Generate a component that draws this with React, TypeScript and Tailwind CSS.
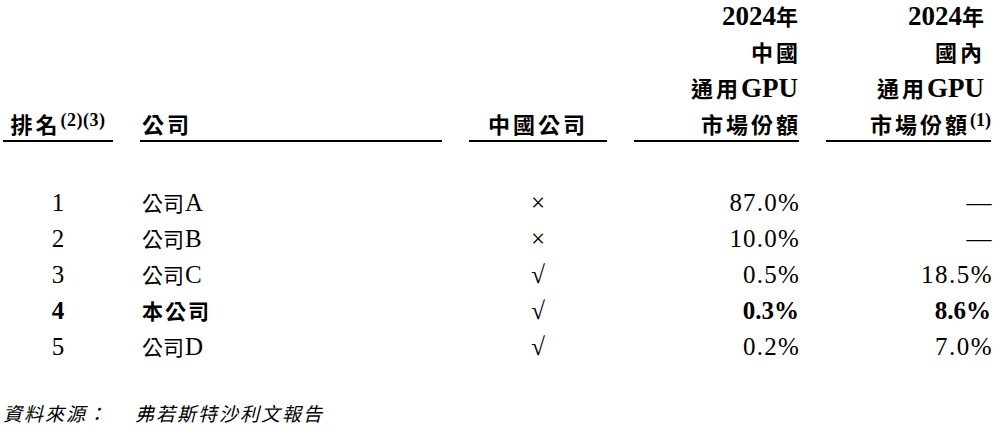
import React from "react";

const font = {
  fontFamily:
    '"Liberation Serif", "Noto Sans CJK TC", "Noto Sans CJK SC", serif',
};

const rows = [
  { rank: "1", cjk: "公司", lat: "A", cn: "×", a: "87.0%", b: "—", bold: false },
  { rank: "2", cjk: "公司", lat: "B", cn: "×", a: "10.0%", b: "—", bold: false },
  { rank: "3", cjk: "公司", lat: "C", cn: "√", a: "0.5%", b: "18.5%", bold: false },
  { rank: "4", cjk: "本公司", lat: "", cn: "√", a: "0.3%", b: "8.6%", bold: true },
  { rank: "5", cjk: "公司", lat: "D", cn: "√", a: "0.2%", b: "7.0%", bold: false },
];

const grid =
  "grid grid-cols-[110px_302px_138px_165px_165px] gap-x-[27px]";

export default function App() {
  return (
    <div
      className="w-[1000px] h-[435px] bg-white text-black px-[3px] overflow-hidden"
      style={font}
    >
      {/* header */}
      <div className={`${grid} items-end font-bold text-[22px]`}>
        <div className="border-b-2 border-black text-center">
          <div className="h-[32px] leading-[36px] tracking-[3px] whitespace-nowrap">
            排名
            <span className="text-[18px] leading-none tracking-[0.5px] relative top-[-7px]">
              (2)(3)
            </span>
          </div>
        </div>
        <div className="border-b-2 border-black">
          <div className="h-[32px] leading-[36px] tracking-[3px] pl-[2px]">
            公司
          </div>
        </div>
        <div className="border-b-2 border-black text-center">
          <div className="h-[32px] leading-[36px] tracking-[3px]">
            中國公司
          </div>
        </div>
        <div className="border-b-2 border-black text-right">
          <div className="h-[36px] leading-[36px] mr-[1px]">
            <span className="text-[27px] leading-none">2024</span>年
          </div>
          <div className="h-[36px] leading-[36px] tracking-[3px] mr-[-2px]">
            中國
          </div>
          <div className="h-[36px] leading-[36px] mr-[1px]">
            <span className="tracking-[3px]">通用</span>
            <span className="text-[27px] leading-none">GPU</span>
          </div>
          <div className="h-[32px] leading-[36px] tracking-[3px] mr-[-2px]">
            市場份額
          </div>
        </div>
        <div className="border-b-2 border-black text-right">
          <div className="h-[36px] leading-[36px] mr-[7px]">
            <span className="text-[27px] leading-none">2024</span>年
          </div>
          <div className="h-[36px] leading-[36px] tracking-[3px] mr-[6px]">
            國內
          </div>
          <div className="h-[36px] leading-[36px] mr-[7px]">
            <span className="tracking-[3px]">通用</span>
            <span className="text-[27px] leading-none">GPU</span>
          </div>
          <div className="h-[32px] leading-[36px] tracking-[3px] whitespace-nowrap">
            市場份額
            <span className="text-[18px] leading-none tracking-normal relative top-[-7px]">
              (1)
            </span>
          </div>
        </div>
      </div>

      {/* body */}
      <div className="mt-[43px] text-[25px]">
        {rows.map((r) => (
          <div
            key={r.rank}
            className={`${grid} h-[36px] leading-[36px] ${r.bold ? "font-bold" : ""}`}
          >
            <div className="text-center">{r.rank}</div>
            <div className="pl-[2px] whitespace-nowrap">
              <span
                className={`text-[21px] leading-none ${r.bold ? "tracking-[2px]" : ""}`}
              >
                {r.cjk}
              </span>
              {r.lat && <span className="ml-[1px]">{r.lat}</span>}
            </div>
            <div className="text-center font-normal">{r.cn}</div>
            <div
              className={`text-right ${r.bold ? "" : "tracking-[1.2px] mr-[-1px]"}`}
            >
              {r.a}
            </div>
            <div
              className={`text-right ${r.bold ? "" : "tracking-[1.5px] mr-[-2px]"}`}
            >
              {r.b}
            </div>
          </div>
        ))}
      </div>

      {/* footer */}
      <div className="mt-[35px] leading-[30px] text-[19px] italic tracking-[2px] flex">
        <span className="w-[132px]">資料來源：</span>
        <span>弗若斯特沙利文報告</span>
      </div>
    </div>
  );
}
